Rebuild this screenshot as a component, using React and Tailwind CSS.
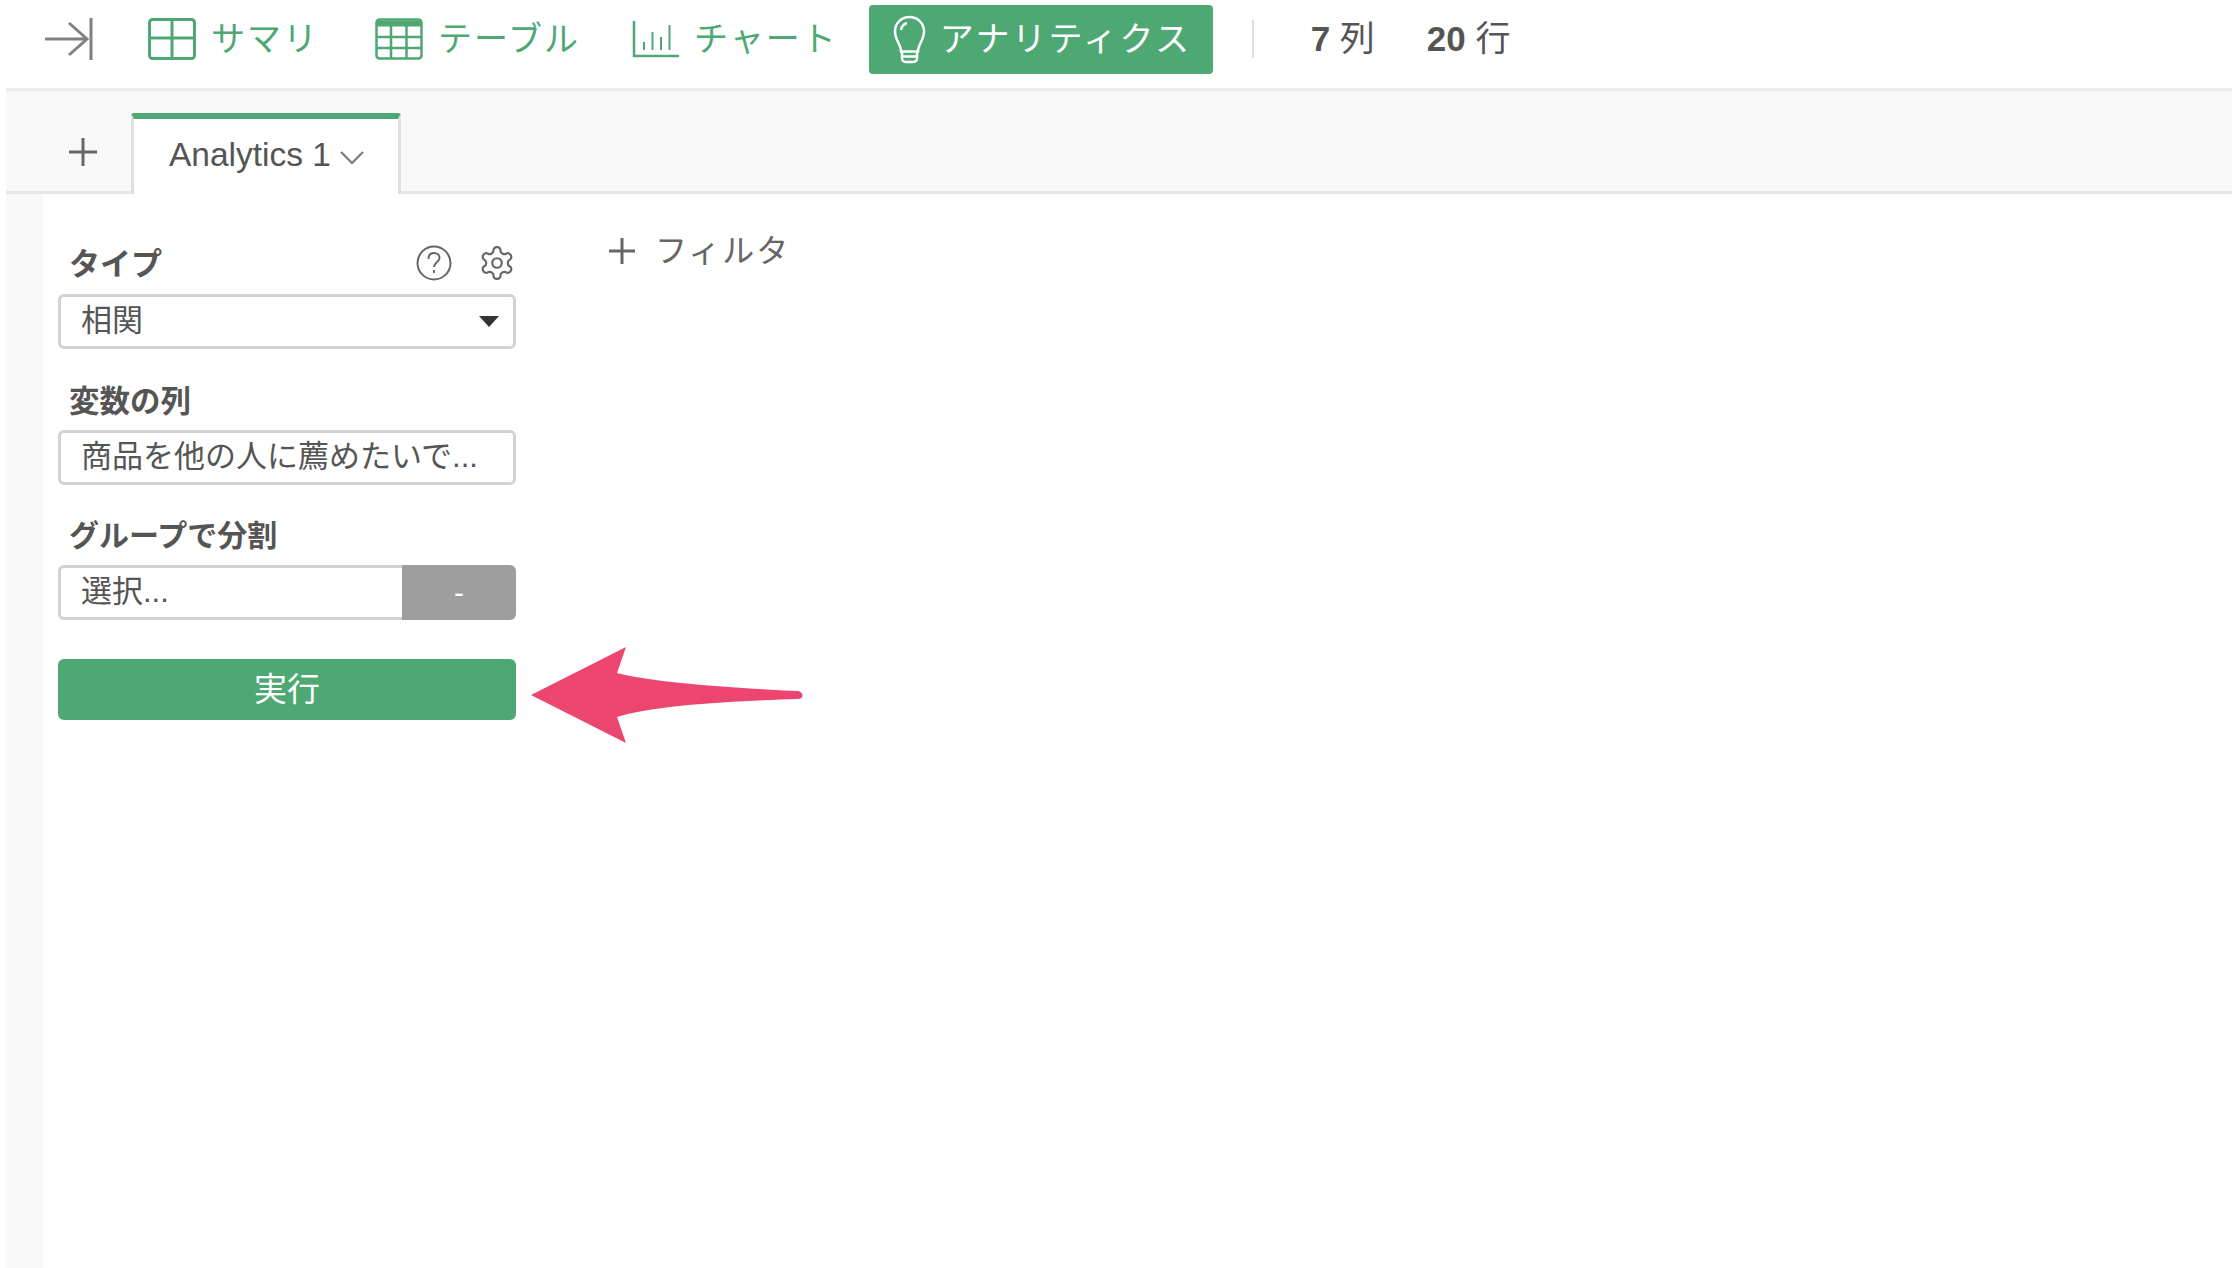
import React from 'react';

const FONT = 'font-["Liberation_Sans","Noto_Sans_CJK_JP",sans-serif]';

const SummaryIcon = () => (
  <svg width="48" height="42" viewBox="0 0 48 42" fill="none" stroke="#4ea874" strokeWidth="3">
    <rect x="1.5" y="1.5" width="45" height="39" rx="3" />
    <path d="M24 1.5V40.5M1.5 20H46.5" />
  </svg>
);

const TableIcon = () => (
  <svg width="48" height="42" viewBox="0 0 48 42" fill="none" stroke="#4ea874" strokeWidth="2.5">
    <rect x="1.5" y="1.5" width="45" height="39" rx="3" />
    <path d="M1.5 5.5H46.5" strokeWidth="6" />
    <path d="M16 6V40.5M31.5 6V40.5M1.5 19H46.5M1.5 30H46.5" />
  </svg>
);

const ChartIcon = () => (
  <svg width="47" height="38" viewBox="0 0 47 38" fill="none" stroke="#4ea874" strokeWidth="2.5">
    <path d="M2 1V36H47" />
    <path d="M12 22V30M20.5 12V30M29 17V30M37.5 5V30" strokeWidth="2" />
  </svg>
);

const BulbIcon = () => (
  <svg width="33" height="49" viewBox="0 0 33 49" fill="none" stroke="#fff" strokeWidth="2.5">
    <path d="M16.5 2C8 2 2 8.500 2 16.500c0 6 3 10 5 15 .8 2 1 3 1 5h17c0-2 .2-3 1-5 2-5 5-9 5-15C31 8.500 25 2 16.500 2Z" />
    <path d="M9 36.500v7c0 2 2 3.500 4 3.500h7c2 0 4-1.500 4-3.500v-7M9 41.500h15" />
    <path d="M8 15c.5-3 3-6 6-7" />
  </svg>
);

const HeaderLink = ({ icon, label, className }) => (
  <div className={`flex items-center gap-[15px] text-[#4ea874] text-[34px] tracking-[2px] ${className}`}>
    {icon}
    <span>{label}</span>
  </div>
);

const FieldLabel = ({ children, className = 'text-[31px]' }) => (
  <div className={`pl-[11px] leading-[40px] font-bold text-[#555] ${className}`}>{children}</div>
);

const Box = ({ children, className = '' }) => (
  <div className={`h-[55px] flex items-center border-[3px] border-[#d2d2d2] rounded-[6px] bg-white pl-[20px] text-[31px] text-[#555] ${className}`}>
    {children}
  </div>
);

export default function App() {
  return (
    <div className={`relative w-[2232px] h-[1268px] overflow-hidden bg-white pl-[6px] flex flex-col ${FONT}`}>
      {/* barra superior */}
      <header className="h-[91px] shrink-0 flex items-center pl-[39px] pb-[10px] border-b-[3px] border-[#ececec]">
        <svg width="48" height="42" viewBox="0 0 48 42" fill="none" stroke="#808080" strokeWidth="3">
          <path d="M0 21H42M24 5L42 21L24 37" />
          <path d="M46 0V42" />
        </svg>
        <HeaderLink className="ml-[55px]" icon={<SummaryIcon />} label="サマリ" />
        <HeaderLink className="ml-[56px]" icon={<TableIcon />} label="テーブル" />
        <HeaderLink className="ml-[52px]" icon={<ChartIcon />} label="チャート" />
        <div className="ml-[31px] w-[344px] h-[69px] flex items-center gap-[14px] pl-[24px] rounded-[4px] bg-[#4ea874] text-white text-[34px] tracking-[2.5px]">
          <BulbIcon />
          <span>アナリティクス</span>
        </div>
        <div className="ml-[39px] w-[2px] h-[38px] bg-[#dcdcdc]" />
        <div className="ml-[57px] text-[35px] text-[#555] whitespace-nowrap">
          <span className="font-bold">7</span> 列
        </div>
        <div className="ml-[52px] text-[35px] text-[#555] whitespace-nowrap">
          <span className="font-bold">20</span> 行
        </div>
      </header>

      {/* pestañas */}
      <div className="h-[103px] shrink-0 bg-[#f9f9f9] flex items-end pl-[37px] border-b-[3px] border-[#e6e6e6]">
        <div className="w-[88px] h-[78px] flex items-center justify-center pr-[8px]">
          <svg width="30" height="30" viewBox="0 0 30 30" stroke="#666" strokeWidth="3">
            <path d="M15 1V29M1 15H29" />
          </svg>
        </div>
        <div className="relative top-[3px] w-[270px] h-[81px] bg-white border-x-[3px] border-[#e0e0e0] border-t-[6px] border-t-[#4ea874] rounded-t-[3px] flex items-center pl-[35px] pb-[3px] gap-[9px] text-[33.500px] text-[#555]">
          <span>Analytics 1</span>
          <svg width="24" height="14" viewBox="0 0 24 14" fill="none" stroke="#777" strokeWidth="2" className="mt-[6px]">
            <path d="M1 1L12 12L23 1" />
          </svg>
        </div>
      </div>

      <div className="flex-1 flex">
        <div className="w-[37px] bg-[#f9f9f9]" />
        <main className="flex-1 flex pl-[15px]">
          <section className="w-[458px] pt-[50px]">
            <div className="flex items-center justify-between">
              <FieldLabel>タイプ</FieldLabel>
              <div className="flex items-center gap-[26px] mb-[3px]">
                <svg width="36" height="36" viewBox="0 0 36 36" fill="none" stroke="#666" strokeWidth="2">
                  <circle cx="18" cy="18" r="16.500" />
                  <path d="M12.500 14c0-4 2.500-6 5.500-6s5.500 2 5.500 5c0 4-5.500 4.500-5.500 9" />
                  <path d="M18 25v3" />
                </svg>
                <svg width="38" height="38" viewBox="0 0 24 24" fill="none" stroke="#666" strokeWidth="1.400">
                  <path d="M12.220 2h-.44a2 2 0 0 0-2 2v.18a2 2 0 0 1-1 1.730l-.43.250a2 2 0 0 1-2 0l-.15-.08a2 2 0 0 0-2.730.730l-.22.380a2 2 0 0 0 .73 2.730l.15.100a2 2 0 0 1 1 1.720v.510a2 2 0 0 1-1 1.740l-.15.090a2 2 0 0 0-.73 2.730l.22.380a2 2 0 0 0 2.730.730l.15-.08a2 2 0 0 1 2 0l.43.250a2 2 0 0 1 1 1.730V20a2 2 0 0 0 2 2h.44a2 2 0 0 0 2-2v-.18a2 2 0 0 1 1-1.730l.43-.250a2 2 0 0 1 2 0l.15.080a2 2 0 0 0 2.730-.730l.22-.390a2 2 0 0 0-.73-2.730l-.15-.08a2 2 0 0 1-1-1.740v-.5a2 2 0 0 1 1-1.740l.15-.09a2 2 0 0 0 .73-2.730l-.22-.380a2 2 0 0 0-2.730-.730l-.15.080a2 2 0 0 1-2 0l-.43-.250a2 2 0 0 1-1-1.730V4a2 2 0 0 0-2-2z" />
                  <circle cx="12" cy="12" r="3" />
                </svg>
              </div>
            </div>
            <Box className="mt-[9px] justify-between pr-[14px]">
              <span>相関</span>
              <span className="w-0 h-0 border-x-[10px] border-x-transparent border-t-[11px] border-t-[#333]" />
            </Box>

            <FieldLabel className="mt-[32px] text-[30.500px]">変数の列</FieldLabel>
            <Box className="mt-[9px]">商品を他の人に薦めたいで...</Box>

            <FieldLabel className="mt-[31px] text-[30px]">グループで分割</FieldLabel>
            <div className="mt-[9px] flex">
              <Box className="w-[344px] rounded-r-none border-r-0">選択...</Box>
              <div className="flex-1 h-[55px] bg-[#9e9e9e] rounded-r-[6px] flex items-center justify-center text-white text-[30px]">-</div>
            </div>

            <button className="mt-[39px] w-full h-[61px] rounded-[6px] bg-[#4ea874] text-white text-[33px]">実行</button>
          </section>

          <div className="ml-[93px] pt-[33px] h-fit flex items-center gap-[20px] text-[32px] tracking-[2px] text-[#666]">
            <svg width="26" height="26" viewBox="0 0 26 26" stroke="#666" strokeWidth="3">
              <path d="M13 0V26M0 13H26" />
            </svg>
            <span>フィルタ</span>
          </div>
        </main>
      </div>

      {/* flecha de anotación */}
      <svg className="absolute left-[525px] top-[640px]" width="285" height="110" viewBox="0 0 285 110">
        <path
          d="M6 55L101 7L92 33C130 43 210 48 273 51C279 52 279 59 273 59C210 61 130 65 92 77L101 103Z"
          fill="#ec4670"
        />
      </svg>
    </div>
  );
}
